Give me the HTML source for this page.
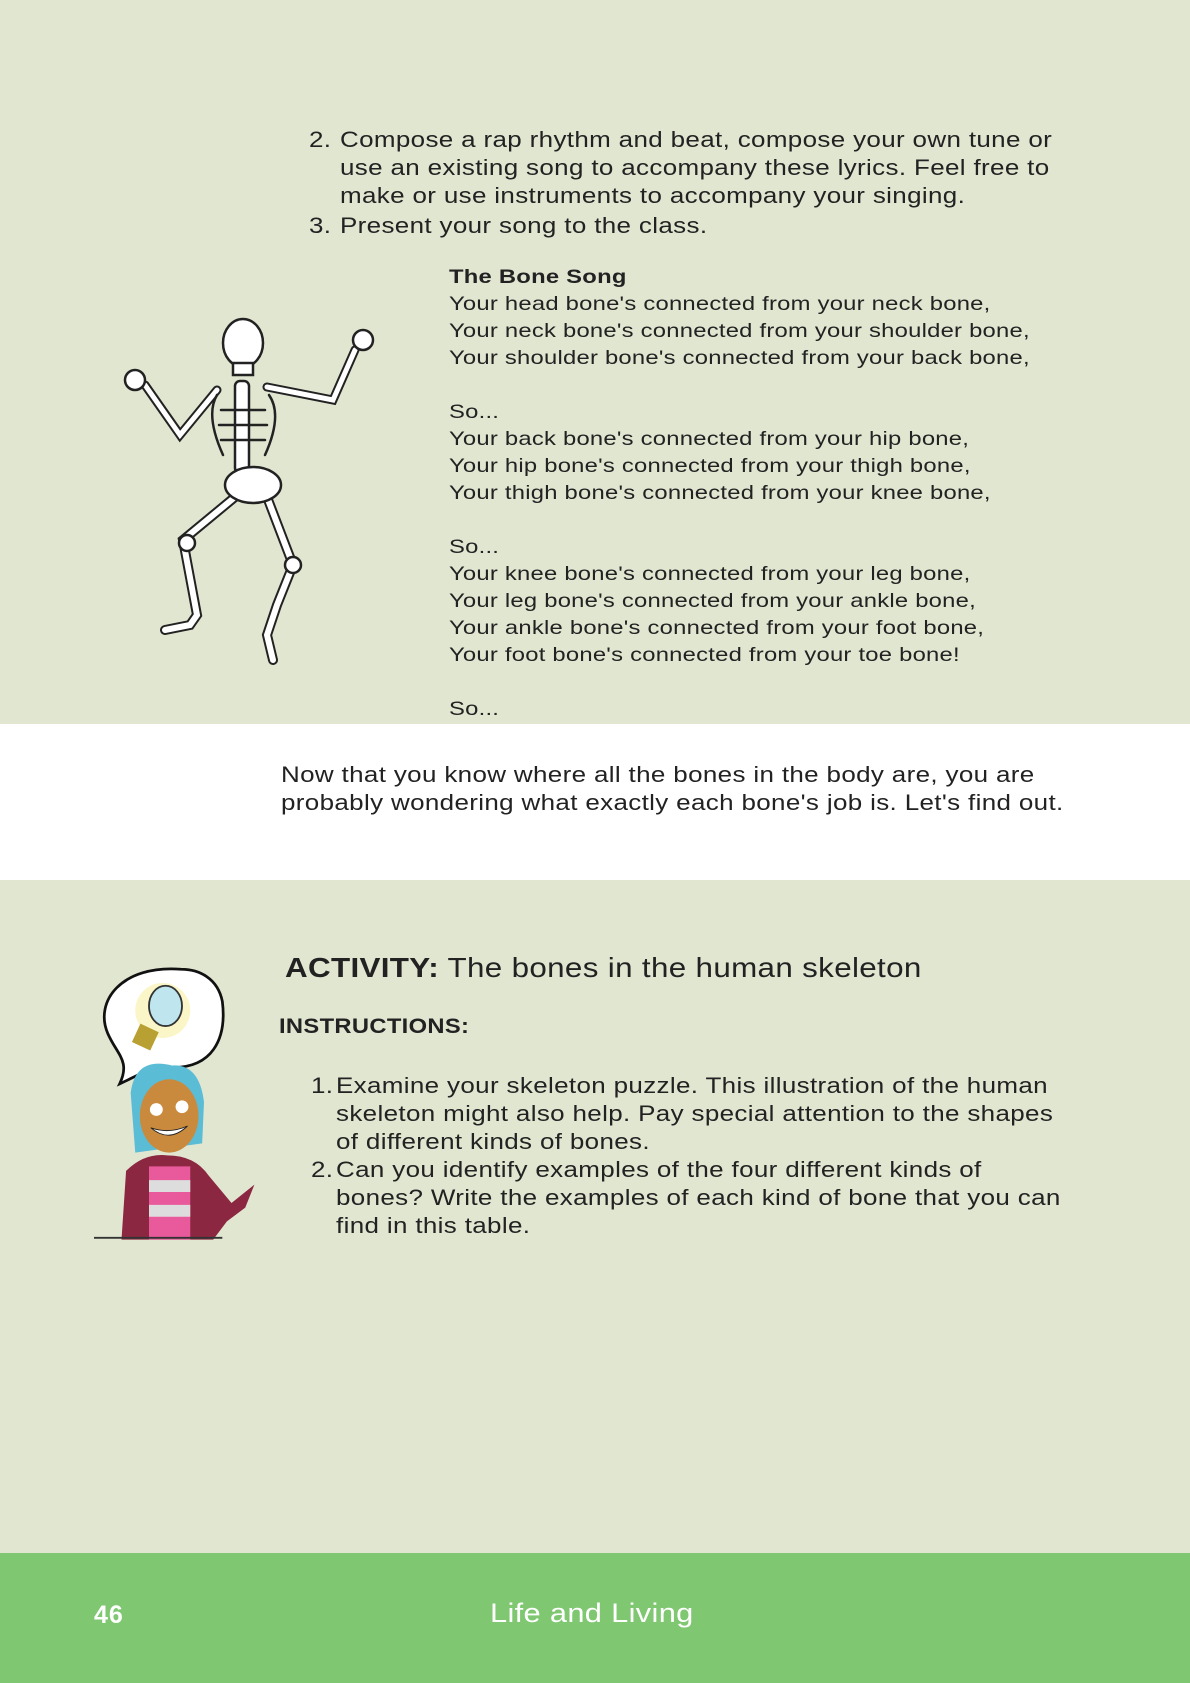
<!DOCTYPE html>
<html><head><meta charset="utf-8"><style>
*{margin:0;padding:0}
body{width:1190px;height:1683px;position:relative;background:#e1e6d1;font-family:"Liberation Sans",sans-serif;color:#222;overflow:hidden}
.t{position:absolute;font-size:22px;line-height:28px;white-space:nowrap;letter-spacing:0.3px;transform:scaleX(1.18);transform-origin:0 0}
.s{position:absolute;font-size:19.5px;line-height:27px;white-space:pre;letter-spacing:0.2px;transform:scaleX(1.22);transform-origin:0 0}
</style></head><body>
<div style="position:absolute;left:0;top:724px;width:1190px;height:156px;background:#fff"></div>
<div style="position:absolute;left:0;top:1553px;width:1190px;height:130px;background:#7fc771"></div>

<div class="t" style="left:309px;top:126px">2.</div>
<div class="t" style="left:340px;top:126px">Compose a rap rhythm and beat, compose your own tune or<br>use an existing song to accompany these lyrics. Feel free to<br>make or use instruments to accompany your singing.</div>
<div class="t" style="left:309px;top:212px">3.</div>
<div class="t" style="left:340px;top:212px">Present your song to the class.</div>

<div class="s" style="left:449px;top:264px"><b>The Bone Song</b>
Your head bone's connected from your neck bone,
Your neck bone's connected from your shoulder bone,
Your shoulder bone's connected from your back bone,

So...
Your back bone's connected from your hip bone,
Your hip bone's connected from your thigh bone,
Your thigh bone's connected from your knee bone,

So...
Your knee bone's connected from your leg bone,
Your leg bone's connected from your ankle bone,
Your ankle bone's connected from your foot bone,
Your foot bone's connected from your toe bone!

So...</div>

<svg style="position:absolute;left:105px;top:315px" width="300" height="360" viewBox="0 0 300 360" fill="#fff" stroke="#222" stroke-width="2.5" stroke-linecap="round">
<path d="M162 72 L228 85 L250 35 M112 75 L75 120 L40 70" fill="none" stroke="#222" stroke-width="9"/>
<path d="M162 72 L228 85 L250 35 M112 75 L75 120 L40 70" fill="none" stroke="#fff" stroke-width="5"/>
<path d="M130 182 L78 225 L92 300 L85 310 L60 315 M162 182 L188 250 L172 290 L162 320 L168 345" fill="none" stroke="#222" stroke-width="10"/>
<path d="M130 182 L78 225 L92 300 L85 310 L60 315 M162 182 L188 250 L172 290 L162 320 L168 345" fill="none" stroke="#fff" stroke-width="6"/>
<ellipse cx="138" cy="28" rx="20" ry="24"/>
<rect x="128" y="48" width="20" height="12"/>
<rect x="130" y="66" width="14" height="92" rx="5"/>
<path d="M112 80 Q100 100 118 140 M164 80 Q178 100 160 140 M116 95 H160 M114 110 H162 M116 125 H160" fill="none"/>
<ellipse cx="258" cy="25" rx="10" ry="10"/>
<ellipse cx="30" cy="65" rx="10" ry="10"/>
<ellipse cx="148" cy="170" rx="28" ry="18"/>
<ellipse cx="82" cy="228" rx="8" ry="8"/>
<ellipse cx="188" cy="250" rx="8" ry="8"/>
</svg>

<div class="t" style="left:281px;top:761px">Now that you know where all the bones in the body are, you are<br>probably wondering what exactly each bone's job is. Let's find out.</div>

<svg style="position:absolute;left:94px;top:937px" width="165" height="312" viewBox="0 0 180 320">
<path d="M95 25 C30 20 0 60 15 95 C25 118 40 125 28 150 C50 140 60 132 80 132 C130 135 145 100 140 60 C135 35 115 25 95 25Z" fill="#fff" stroke="#111" stroke-width="3"/>
<circle cx="75" cy="70" r="30" fill="#fbf6c8"/>
<ellipse cx="78" cy="65" rx="18" ry="22" fill="#bfe6ef" stroke="#333" stroke-width="2"/>
<rect x="45" y="88" width="22" height="22" fill="#b8a032" transform="rotate(25 56 99)"/>
<path d="M40 160 Q45 120 85 130 Q115 128 120 170 L118 215 L45 225Z" fill="#5bbcd6"/>
<ellipse cx="82" cy="185" rx="32" ry="40" fill="#c98a3e"/>
<circle cx="68" cy="178" r="7" fill="#fff"/><circle cx="96" cy="175" r="7" fill="#fff"/>
<path d="M62 198 Q82 215 102 196 Q82 205 62 198Z" fill="#fff" stroke="#222"/>
<path d="M30 320 L35 245 Q55 225 80 228 Q110 228 125 250 L150 280 L175 260 L165 285 L145 300 L130 320Z" fill="#8b2740"/>
<path d="M60 240 H105 V320 H60Z" fill="#e95a9c"/>
<path d="M60 255 H105 V268 H60Z M60 282 H105 V295 H60Z" fill="#ddd"/>
<path d="M0 318 H140" stroke="#333" stroke-width="2"/>
</svg>

<div style="position:absolute;left:285px;top:950px;font-size:28px;line-height:36px;white-space:nowrap;letter-spacing:0.3px;transform:scaleX(1.12);transform-origin:0 0"><b>ACTIVITY:</b> The bones in the human skeleton</div>
<div style="position:absolute;left:279px;top:1015px;font-size:21px;font-weight:bold;letter-spacing:0.3px;transform:scaleX(1.13);transform-origin:0 0">INSTRUCTIONS:</div>
<div class="t" style="left:311px;top:1072px">1.<br><br><br>2.</div>
<div class="t" style="left:336px;top:1072px">Examine your skeleton puzzle. This illustration of the human<br>skeleton might also help. Pay special attention to the shapes<br>of different kinds of bones.<br>Can you identify examples of the four different kinds of<br>bones? Write the examples of each kind of bone that you can<br>find in this table.</div>

<div style="position:absolute;left:94px;top:1601px;font-size:25px;font-weight:bold;color:#fff;letter-spacing:1px">46</div>
<div style="position:absolute;left:490px;top:1598px;font-size:27px;color:#fff;letter-spacing:0.3px;transform:scaleX(1.14);transform-origin:0 0">Life and Living</div>
</body></html>
